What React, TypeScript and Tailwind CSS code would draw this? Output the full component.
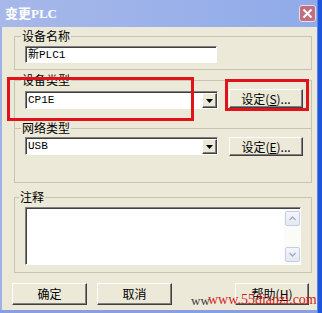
import React from "react";

const raised =
  "bg-[#ece9d8] border border-t-white border-l-white border-r-[#404040] border-b-[#404040] shadow-[inset_-1px_-1px_0_#808080]";
const sunken =
  "border border-t-[#808080] border-l-[#808080] border-r-white border-b-white shadow-[inset_1px_1px_0_#404040]";

function Button({ children, className = "" }: { children: React.ReactNode; className?: string }) {
  return (
    <div
      className={`flex items-center justify-center text-[12px] leading-none text-black font-['Noto_Sans_CJK_SC',sans-serif] ${raised} ${className}`}
    >
      {children}
    </div>
  );
}

function Group({
  label,
  labelPos,
  className = "",
  children,
}: {
  label: string;
  labelPos: string;
  className?: string;
  children: React.ReactNode;
}) {
  return (
    <div className={`relative border border-[#c6c3b3] ${className}`}>
      <span
        className={`absolute top-[-8px] ${labelPos} px-[1px] bg-[#ece9d8] text-[12px] leading-[14px] text-black font-['Noto_Sans_CJK_SC',sans-serif]`}
      >
        {label}
      </span>
      {children}
    </div>
  );
}

function Combo({ value, className = "" }: { value: string; className?: string }) {
  return (
    <div className={`flex w-[193px] h-[18px] pt-[1px] pl-[1px] bg-white ${sunken} ${className}`}>
      <div className="flex-1 flex items-center pl-[1px] text-[11px] leading-none text-black font-['Liberation_Mono','Noto_Sans_CJK_SC',monospace]">
        {value}
      </div>
      <div className={`w-[15px] h-full flex items-center justify-center ${raised}`}>
        <svg width="7" height="4" viewBox="0 0 7 4">
          <path d="M0 0H7L3.5 4Z" fill="#000" />
        </svg>
      </div>
    </div>
  );
}

function ScrollBtn({ up }: { up?: boolean }) {
  return (
    <div className="w-[15px] h-[15px] rounded-[2px] border border-[#c4cde6] bg-[linear-gradient(to_bottom,#f4f6fb,#e3e8f3)] flex items-center justify-center">
      <svg width="7" height="5" viewBox="0 0 7 5">
        <path
          d={up ? "M0.5 4L3.5 1L6.5 4" : "M0.5 1L3.5 4L6.5 1"}
          fill="none"
          stroke="#a3abc2"
          strokeWidth="1.4"
        />
      </svg>
    </div>
  );
}

export default function App() {
  return (
    <div className="relative w-[322px] h-[313px] overflow-hidden flex bg-[#ece9d8]">
      <div className="flex-1 flex flex-col min-w-0">
        {/* title bar */}
        <div className="h-[27px] flex justify-between items-start bg-[linear-gradient(to_right,#a7b8e9,#90abea)]">
          <span className="pl-[5px] pt-[6px] text-[13px] leading-[16px] font-bold text-white font-['Liberation_Serif','Noto_Sans_CJK_SC',serif]">
            变更PLC
          </span>
          <div className="mt-[5px] mr-[1px] w-[17px] h-[17px] rounded-[3px] border border-[#eed9de] bg-[#c06f80] flex items-center justify-center">
            <svg width="11" height="11" viewBox="0 0 11 11">
              <path d="M1.5 1.5L9.5 9.5M9.5 1.5L1.5 9.5" stroke="#fff" strokeWidth="2" />
            </svg>
          </div>
        </div>
        {/* body */}
        <div className="flex-1 flex min-h-0">
          <div className="w-[2px] bg-[#9fb2e6]" />
          <div className="flex-1 flex flex-col">
            <Group label="设备名称" labelPos="left-[6px]" className="mt-[9px] ml-[12px] w-[298px] h-[34px]">
              <div className="pt-[9px] pl-[10px]">
                <div
                  className={`w-[192px] h-[17px] bg-white flex items-center pl-[2px] pt-[1px] text-[11px] leading-none text-black font-['Liberation_Mono','Noto_Sans_CJK_SC',monospace] ${sunken}`}
                >
                  新PLC1
                </div>
              </div>
            </Group>
            <Group
              label="设备类型"
              labelPos="left-[6px]"
              className="mt-[10px] ml-[12px] w-[298px] h-[48px] border-b-0"
            >
              <div className="pt-[8px] pl-[10px] flex items-start gap-[11px]">
                <Combo value="CP1E" className="mt-[2px]" />
                <Button className="w-[74px] h-[19px]">
                  设定(<span className="underline">S</span>)...
                </Button>
              </div>
            </Group>
            <Group label="网络类型" labelPos="left-[6px]" className="ml-[12px] w-[298px] h-[55px]">
              <div className="pt-[8px] pl-[10px] flex items-start gap-[11px]">
                <Combo value="USB" />
                <Button className="w-[74px] h-[19px]">
                  设定(<span className="underline">E</span>)...
                </Button>
              </div>
            </Group>
            <Group label="注释" labelPos="left-[4px]" className="mt-[14px] ml-[12px] w-[298px] h-[76px]">
              <div className="pt-[9px] pl-[10px]">
                <div className={`w-[276px] h-[58px] flex bg-white pt-[1px] pl-[1px] ${sunken}`}>
                  <div className="flex-1" />
                  <div className="w-[16px] h-full flex flex-col justify-between items-center py-[2px] bg-[#fbfbf8]">
                    <ScrollBtn up />
                    <ScrollBtn />
                  </div>
                </div>
              </div>
            </Group>
            <div className="mt-[10px] ml-[10px] mr-[8px] flex gap-[10px]">
              <Button className="w-[75px] h-[22px]">确定</Button>
              <Button className="w-[75px] h-[22px]">取消</Button>
              <Button className="ml-auto w-[74px] h-[22px]">
                帮助(<span className="underline">H</span>)
              </Button>
            </div>
          </div>
        </div>
        <div className="h-[3px] bg-[#86a0e2]" />
      </div>
      <div className="w-[5px] bg-[#1d56dc] border-l border-[#5a86ea]" />

      {/* red annotation rectangles */}
      <div className="absolute left-[7px] top-[77px] w-[187px] h-[44px] border-[3px] border-[#e0121a]" />
      <div className="absolute left-[225px] top-[79px] w-[84px] h-[32px] border-[3px] border-[#e0121a]" />

      {/* watermark */}
      <span className="absolute left-[191px] top-[294px] text-[13px] leading-[14px] text-[#3c3c3c] font-['Liberation_Serif',serif]">
        ww
      </span>
      <span className="absolute left-[208px] top-[293px] text-[14px] leading-[14px] text-[#d41c1c] font-['Liberation_Serif',serif]">
        www.55dianzi.com
      </span>
    </div>
  );
}
